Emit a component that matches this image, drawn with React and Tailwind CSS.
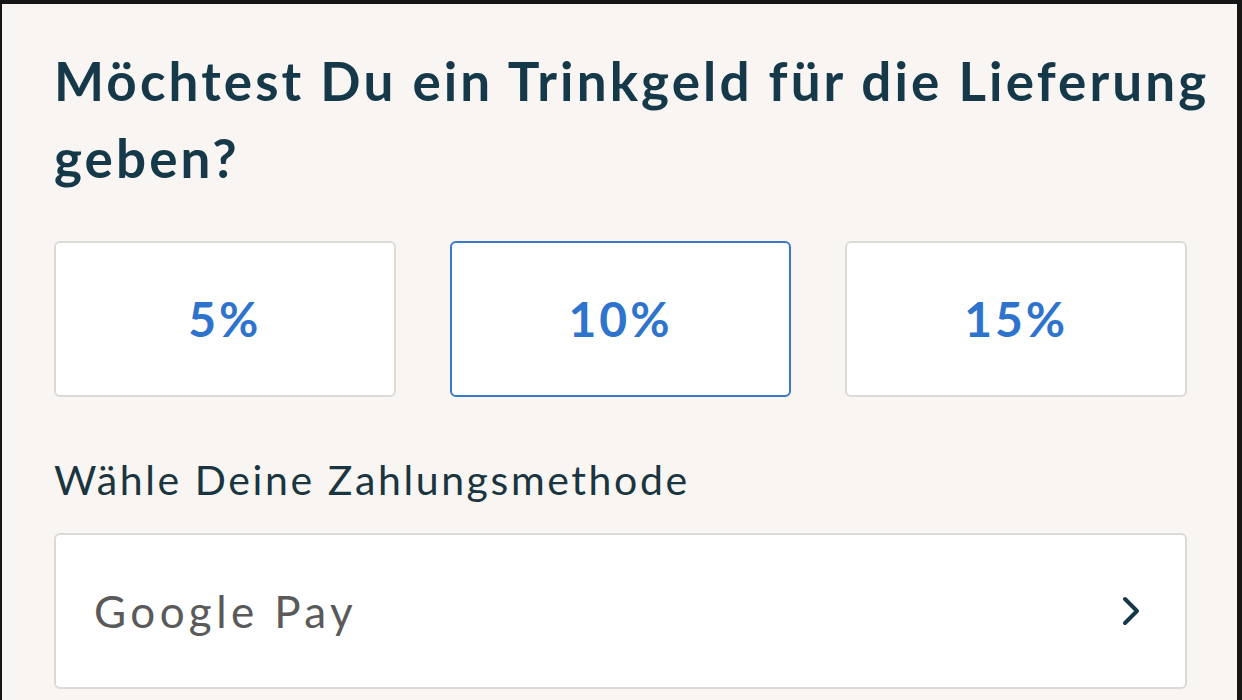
export default function App() {
  const tips = ['5%', '10%', '15%'];
  const selected = '10%';

  return (
    <div className="w-[1242px] h-[700px] overflow-hidden bg-[#161616] pt-[4px] pl-[2px] pr-[5px]">
      <div className="h-full bg-[#f8f5f2] pl-[52px] pr-[50px] pt-[38px] font-['Lato',sans-serif]">
        <h1 className="w-[1200px] text-[53px] leading-[77px] font-bold text-[#16394a] tracking-[3.1px]">
          Möchtest Du ein Trinkgeld für die Lieferung
          <br />
          geben?
        </h1>

        <div className="grid grid-cols-3 gap-[54px] mt-[45px]">
          {tips.map((t) => (
            <button
              key={t}
              className={
                t === selected
                  ? 'h-[156px] bg-white rounded-[6px] border-2 border-[#3a78c9] text-[48px] font-bold tracking-[3px] text-[#2f74cc]'
                  : 'h-[156px] bg-white rounded-[6px] border-2 border-[#dcdad7] text-[48px] font-bold tracking-[3px] text-[#2f74cc]'
              }
            >
              {t}
            </button>
          ))}
        </div>

        <p className="mt-[59px] text-[41px] leading-[48px] tracking-[2.6px] text-[#1b3540]">
          Wähle Deine Zahlungsmethode
        </p>

        <div className="mt-[29px] h-[156px] bg-white rounded-[6px] border-2 border-[#dcdad7] flex items-center justify-between pl-[38px] pr-[44px]">
          <span className="text-[44px] tracking-[4.4px] text-[#5a5a5a]">Google Pay</span>
          <svg width="20" height="32" viewBox="0 0 20 32" fill="none" className="text-[#16394a]">
            <path d="M4 4 L16 16 L4 28" stroke="currentColor" strokeWidth="4" strokeLinecap="round" strokeLinejoin="round" />
          </svg>
        </div>
      </div>
    </div>
  );
}
